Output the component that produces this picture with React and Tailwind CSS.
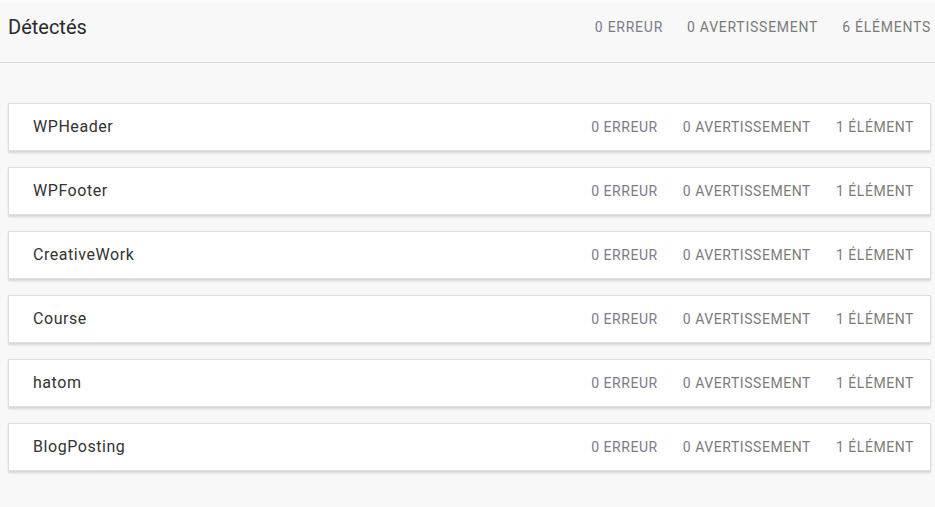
const ITEMS = ['WPHeader', 'WPFooter', 'CreativeWork', 'Course', 'hatom', 'BlogPosting']

function Stats({ errors, warnings, items, className }) {
  return (
    <div className={'flex items-center uppercase text-[#7b7b7b] ' + className}>
      <span className="text-[#7b7b8c]">{errors} erreur</span>
      <span>{warnings} avertissement</span>
      <span>{items}</span>
    </div>
  )
}

export default function App() {
  return (
    <div
      className="min-h-[507px] border-t-2 border-white bg-[#f8f8f8]"
      style={{ fontFamily: 'Roboto, "Liberation Sans", sans-serif' }}
    >
      <header className="flex h-[61px] items-center justify-between border-b border-[#dcdcdc] pl-2 pr-1 pb-[10px]">
        <h1 className="text-[20px] text-[#2a2a2a]">Détectés</h1>
        <Stats errors={0} warnings={0} items="6 éléments" className="gap-6 text-[14px] tracking-[0.75px]" />
      </header>

      <div className="flex flex-col gap-4 pl-2 pr-1 pt-10">
        {ITEMS.map((name) => (
          <div
            key={name}
            className="flex h-12 items-center justify-between border border-[#dedede] bg-white pl-6 pr-4 shadow-[0_2px_2px_rgba(0,0,0,0.14)]"
          >
            <span className="text-[16px] tracking-[0.55px] text-[#333]">{name}</span>
            <Stats errors={0} warnings={0} items="1 élément" className="gap-[25px] text-[14px] tracking-[0.55px]" />
          </div>
        ))}
      </div>
    </div>
  )
}
